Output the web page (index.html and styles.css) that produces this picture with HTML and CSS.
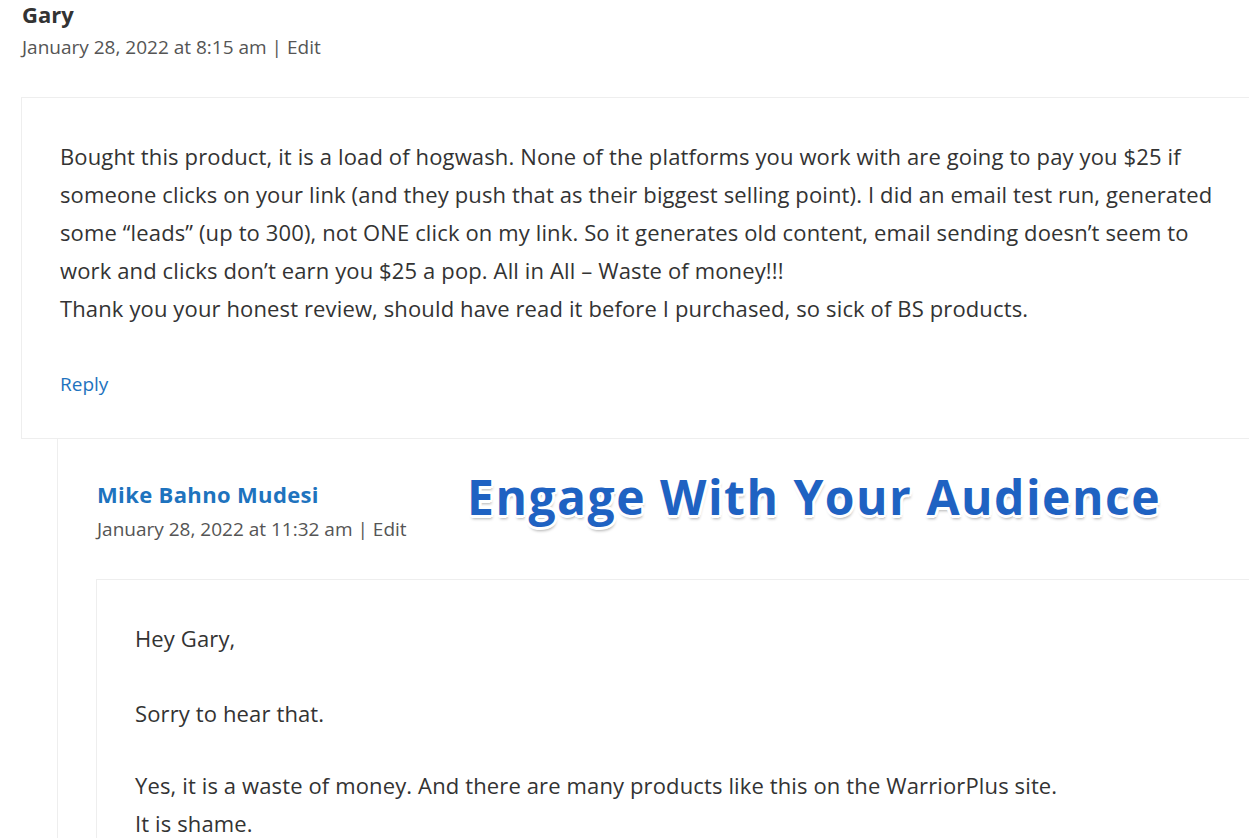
FILE: index.html
```html
<!DOCTYPE html>
<html>
<head>
<meta charset="utf-8">
<link rel="stylesheet" href="styles.css">
</head>
<body>
<div class="thread">
  <article class="comment">
    <div class="author">Gary</div>
    <div class="meta">January 28, 2022 at 8:15 am <span class="sep">|</span> <a class="edit">Edit</a></div>
    <div class="body">
      <p>Bought this product, it is a load of hogwash. None of the platforms you work with are going to pay you $25 if someone clicks on your link (and they push that as their biggest selling point). I did an email test run, generated some “leads” (up to 300), not ONE click on my link. So it generates old content, email sending doesn’t seem to work and clicks don’t earn you $25 a pop. All in All – Waste of money!!!<br>Thank you your honest review, should have read it before I purchased, so sick of BS products.</p>
      <p class="reply"><a>Reply</a></p>
    </div>
    <div class="children">
      <div class="banner">Engage With Your Audience</div>
      <article class="comment child">
        <div class="author link">Mike Bahno Mudesi</div>
        <div class="meta">January 28, 2022 at 11:32 am <span class="sep">|</span> <a class="edit">Edit</a></div>
        <div class="body">
          <p class="p-greet">Hey Gary,</p>
          <p class="p-sorry">Sorry to hear that.</p>
          <p>Yes, it is a waste of money. And there are many products like this on the WarriorPlus site.<br>It is shame.</p>
        </div>
      </article>
    </div>
  </article>
</div>
</body>
</html>
```
FILE: styles.css
```css
html, body {
  margin: 0;
  padding: 0;
  background: #fff;
  overflow: hidden;
  height: 838px;
}
body {
  font-family: "Open Sans", "Noto Sans", sans-serif;
  color: #333;
}
.thread {
  width: 1250px;
  padding-left: 21px;
}
.author {
  font-size: 22px;
  font-weight: 700;
  line-height: 28px;
  padding-left: 1px;
  color: #333;
}
.author.link {
  color: #1e73be;
  letter-spacing: 0.35px;
}
.meta {
  font-size: 19px;
  line-height: 28px;
  margin-top: 5px;
  padding-left: 1px;
  color: #555;
}
.meta .sep, .meta .edit {
  color: #555;
}
.body {
  margin-top: 36px;
  border: 1px solid #eee;
  padding: 39px 38px 35px 38px;
  font-size: 22px;
  letter-spacing: 0.13px;
  line-height: 38px;
}
.body p {
  margin: 0 0 38px 0;
}
.body p:last-child {
  margin-bottom: 0;
}
.body .reply {
  margin-top: 34px;
  font-size: 19px;
  letter-spacing: 0;
}
.reply a {
  color: #1e73be;
}
.children {
  position: relative;
  margin-left: 36px;
  border-left: 1px solid #eee;
  padding-left: 38px;
  padding-top: 42px;
}
.child .author {
  margin-top: -1px;
}
.child .meta {
  margin-top: 7px;
}
.child .body {
  margin-top: 36px;
  padding-top: 39px;
}
.child .body .p-greet {
  margin-bottom: 37px;
}
.child .body .p-sorry {
  margin-bottom: 34px;
}
.banner {
  position: absolute;
  left: 409px;
  top: 34px;
  font-family: "Open Sans", sans-serif;
  font-weight: 700;
  font-size: 48px;
  line-height: 48px;
  letter-spacing: 1.5px;
  color: #1f62c2;
  white-space: nowrap;
  text-shadow:
    -2px -2px 0 #fff, 2px -2px 0 #fff, -2px 2px 0 #fff, 2px 2px 0 #fff,
    0 -3px 0 #fff, 0 3px 0 #fff, -3px 0 0 #fff, 3px 0 0 #fff,
    1px 4px 3px rgba(0,0,0,0.3);
}
```
